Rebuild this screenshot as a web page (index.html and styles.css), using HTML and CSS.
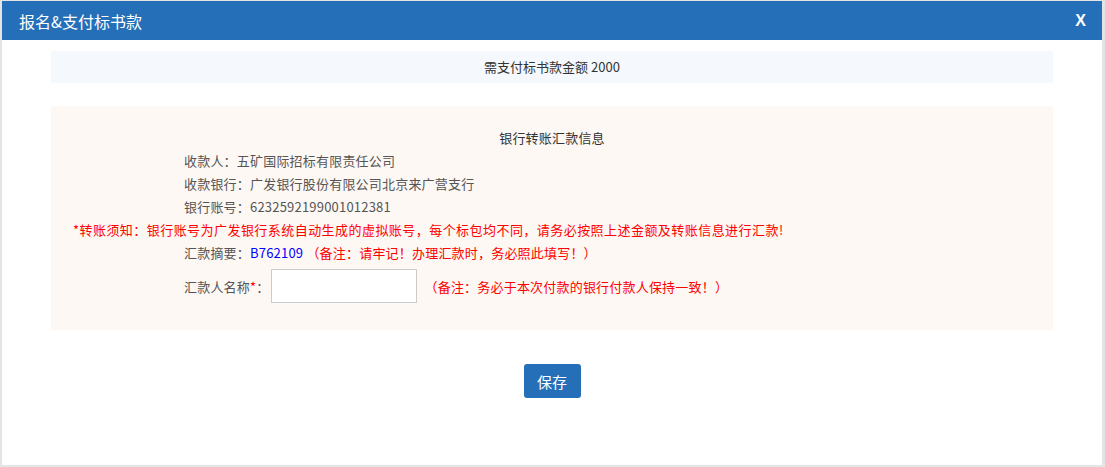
FILE: index.html
```html
<!DOCTYPE html>
<html lang="zh-CN">
<head>
    <meta charset="UTF-8">
    <title>报名&amp;支付标书款</title>
    <link rel="stylesheet" href="styles.css">
</head>
<body>
    <div class="dialog">
        <div class="dialog-head">
            <span class="dialog-title">报名&amp;支付标书款</span>
            <span class="dialog-close">X</span>
        </div>
        <div class="dialog-body">
            <div class="amount-bar">需支付标书款金额 2000</div>
            <div class="bank-info">
                <div class="info-title">银行转账汇款信息</div>
                <div class="info-line">收款人：五矿国际招标有限责任公司</div>
                <div class="info-line">收款银行：广发银行股份有限公司北京来广营支行</div>
                <div class="info-line">银行账号：6232592199001012381</div>
                <div class="notice">*转账须知：银行账号为广发银行系统自动生成的虚拟账号，每个标包均不同，请务必按照上述金额及转账信息进行汇款!</div>
                <div class="info-line">汇款摘要：<span class="code">B762109</span> <span class="red">（备注：请牢记！办理汇款时，务必照此填写！）</span></div>
                <div class="name-row">
                    <label class="name-label">汇款人名称<span class="red">*</span>：</label>
                    <input type="text" class="name-input">
                    <span class="red">（备注：务必于本次付款的银行付款人保持一致！）</span>
                </div>
            </div>
            <div class="actions">
                <button class="btn-save">保存</button>
            </div>
        </div>
    </div>
</body>
</html>
```

FILE: styles.css
```css
body {
    margin: 0;
    padding: 1px 3px 2px 2px;
    background-color: #e4e4e4;
    font-family: "Noto Sans CJK SC", "Noto Sans", sans-serif;
    font-size: 13px;
    color: #555;
}
.dialog {
    background-color: #fff;
    height: 464px;
    box-sizing: border-box;
}
.dialog-head {
    height: 39px;
    background-color: #246fb8;
    color: #fff;
    display: flex;
    align-items: center;
    justify-content: space-between;
    padding: 0 16px 0 17px;
}
.dialog-title {
    font-size: 16px;
}
.dialog-close {
    font-family: "Liberation Sans", Arial, sans-serif;
    font-size: 16px;
    font-weight: bold;
}
.dialog-body {
    padding: 11px 49px 0 49px;
}
.amount-bar {
    height: 32px;
    line-height: 32px;
    background-color: #f5f8fc;
    text-align: center;
    color: #333;
}
.bank-info {
    margin-top: 23px;
    background-color: #fdf8f4;
    padding: 20px 0 27px 0;
    line-height: 23px;
    letter-spacing: 0.2px;
}
.info-title {
    text-align: center;
    color: #333;
}
.info-line {
    padding-left: 133px;
}
.notice {
    padding-left: 22px;
    color: #f00;
    letter-spacing: 0.45px;
}
.code {
    color: #00f;
}
.red {
    color: #f00;
}
.name-row {
    display: flex;
    align-items: center;
    padding-left: 133px;
    margin-top: 5px;
}
.name-input {
    width: 146px;
    height: 34px;
    box-sizing: border-box;
    border: 1px solid #ccc;
    margin: 0 8px 0 1px;
    background: #fff;
}
.actions {
    text-align: center;
    padding-top: 34px;
}
.btn-save {
    width: 57px;
    height: 34px;
    border: none;
    border-radius: 3px;
    background-color: #246fb8;
    color: #fff;
    font-family: "Noto Sans CJK SC", sans-serif;
    font-size: 15px;
    cursor: pointer;
}
```
